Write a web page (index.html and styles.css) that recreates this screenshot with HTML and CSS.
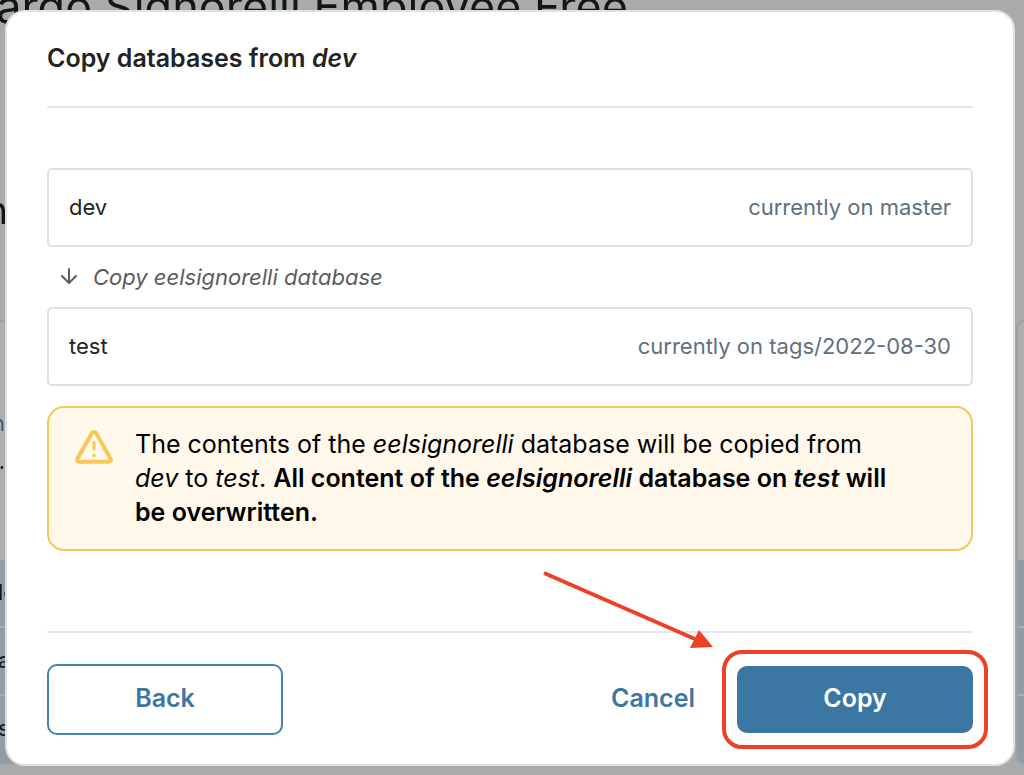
FILE: index.html
```
<!DOCTYPE html>
<html lang="en">
<head>
    <meta charset="UTF-8">
    <meta name="viewport" content="width=device-width, initial-scale=1.0">
    <title>Copy databases</title>
    <link rel="stylesheet" href="styles.css">
</head>
<body>
    <div class="page" aria-hidden="true">
        <div class="page-title"><span>ardo Signorelli Employee Free</span></div>
        <div class="page-tabs"><span>n</span></div>
        <div class="page-panels">
            <div class="panel panel-left">
                <div class="panel-info">
                    <span class="panel-link">n</span>
                    <span>.</span>
                </div>
                <div class="panel-row">le</div>
                <div class="panel-row">a</div>
                <div class="panel-row">s</div>
            </div>
            <div class="panel panel-right">
                <div class="panel-info"></div>
                <div class="panel-row"></div>
                <div class="panel-row"></div>
                <div class="panel-row"></div>
            </div>
        </div>
    </div>

    <div class="overlay">
        <div class="modal" role="dialog" aria-labelledby="modalTitle">
            <h1 class="modal-title" id="modalTitle">Copy databases from <em>dev</em></h1>

            <div class="modal-body">
                <div class="environment">
                    <span>dev</span>
                    <span class="environment-status">currently on master</span>
                </div>

                <div class="copy-step">
                    <svg width="18" height="18" viewBox="0 0 18 18" fill="none" stroke="currentColor" stroke-width="2" stroke-linecap="round" stroke-linejoin="round">
                        <path d="M9 1v14M2 8l7 7 7-7"/>
                    </svg>
                    <em>Copy eelsignorelli database</em>
                </div>

                <div class="environment">
                    <span>test</span>
                    <span class="environment-status">currently on tags/2022-08-30</span>
                </div>

                <div class="alert">
                    <svg class="alert-icon" width="40" height="36" viewBox="0 0 40 36" fill="none" stroke="currentColor" stroke-linecap="round" stroke-linejoin="round">
                        <path stroke-width="4" d="M17.9 4.2 3.4 29.8a2 2 0 0 0 1.8 3h29.6a2 2 0 0 0 1.8-3L22.1 4.2a2.4 2.4 0 0 0-4.2 0z"/>
                        <path stroke-width="3" d="M20 13.500v6.500"/>
                        <circle cx="20" cy="26.500" r="1.800" fill="currentColor" stroke="none"/>
                    </svg>
                    <p>The contents of the <em>eelsignorelli</em> database will be copied from <em>dev</em> to <em>test</em>. <strong>All content of the <em>eelsignorelli</em> database on <em>test</em> will be overwritten.</strong></p>
                </div>
            </div>

            <div class="modal-footer">
                <button type="button" class="btn btn-outline">Back</button>
                <div class="modal-actions">
                    <button type="button" class="btn-link">Cancel</button>
                    <div class="highlight">
                        <button type="button" class="btn btn-primary">Copy</button>
                        <svg class="pointer" width="172" height="82" viewBox="0 0 172 82">
                            <path d="M4 4 155 70" stroke="#eb4226" stroke-width="4"/>
                            <path d="M173 78 159 61 150 79z" fill="#eb4226"/>
                        </svg>
                    </div>
                </div>
            </div>
        </div>
    </div>
</body>
</html>
```
FILE: styles.css
```
* {
    box-sizing: border-box;
}

body {
    margin: 0;
    min-height: 100vh;
    background-color: #a9abaa;
    font-family: Inter, "Liberation Sans", sans-serif;
    font-size: 22px;
    color: #232323;
}

/* Dimmed page behind the dialog */
.page {
    position: fixed;
    top: 0;
    right: 0;
    bottom: 0;
    left: 0;
    overflow: hidden;
    color: #131618;
}

.page-title {
    display: flex;
    justify-content: flex-end;
    width: 628px;
    height: 190px;
    margin-top: -20px;
    font-size: 45px;
    line-height: 54px;
    white-space: nowrap;
}

.page-tabs {
    display: flex;
    justify-content: flex-end;
    width: 8px;
    height: 150px;
    padding-top: 20px;
    font-size: 38px;
    line-height: 40px;
}

.page-panels {
    display: flex;
    justify-content: space-between;
}

.panel {
    background-color: #adadad;
    border: 2px solid #9da0a3;
    border-bottom: none;
    overflow: hidden;
}

.panel-left {
    width: 50px;
    border-left: none;
}

.panel-right {
    width: 8px;
    border-right: none;
    border-radius: 16px 0 0 16px;
}

.panel-info {
    display: flex;
    flex-direction: column;
    align-items: flex-end;
    width: 5px;
    height: 238px;
    padding-top: 82px;
    line-height: 38px;
}

.panel-link {
    color: #2f6584;
}

.panel-row {
    height: 68px;
    border-bottom: 2px solid #adadad;
    background-color: #919da6;
    line-height: 64px;
    text-indent: -2px;
}

.panel-row:last-child {
    border-bottom: none;
}

/* Dialog */
.overlay {
    position: relative;
    padding: 10px 9px 9px 5px;
}

.modal {
    padding: 29px 40px;
    border: 2px solid #dde1e6;
    border-radius: 20px;
    background-color: #fff;
}

.modal-title {
    margin: 0;
    padding-bottom: 31px;
    border-bottom: 2px solid #e3e5e9;
    font-size: 25px;
    font-weight: 600;
    line-height: 34px;
}

.modal-body {
    padding: 60px 0 80px;
}

.environment {
    display: flex;
    justify-content: space-between;
    padding: 24px 20px;
    border: 2px solid #e0e0e0;
    border-radius: 5px;
    line-height: 27px;
}

.environment-status {
    color: #5f7080;
}

.copy-step {
    display: flex;
    align-items: center;
    gap: 15px;
    height: 60px;
    padding-left: 13px;
    color: #5c5c5c;
}

.alert {
    display: flex;
    gap: 21px;
    margin-top: 20px;
    padding: 19px 72px 20px 25px;
    border: 2px solid #f4c75c;
    border-radius: 17px;
    background-color: #fff8eb;
    color: #000;
    font-size: 25px;
    line-height: 34px;
}

.alert-icon {
    flex-shrink: 0;
    margin-top: 2px;
    color: #f7c859;
}

.alert p {
    margin: 0;
}

.alert strong {
    font-weight: 600;
}

.modal-footer {
    display: flex;
    align-items: center;
    justify-content: space-between;
    padding-top: 31px;
    border-top: 2px solid #e1e7ec;
}

.modal-actions {
    display: flex;
    align-items: center;
    gap: 42px;
}

.btn,
.btn-link {
    padding: 0 0 3px;
    font-family: inherit;
    font-size: 25px;
    font-weight: 600;
    cursor: pointer;
}

.btn {
    width: 236px;
    border-radius: 10px;
}

.btn-outline {
    height: 71px;
    border: 2px solid #4583ac;
    background-color: #fff;
    color: #3c77a2;
}

.btn-primary {
    display: block;
    height: 67px;
    border: none;
    background-color: #3c77a3;
    color: #fff;
}

.btn-link {
    border: none;
    background: none;
    color: #3c77a2;
}

.highlight {
    position: relative;
}

.highlight::after {
    content: "";
    position: absolute;
    top: -16px;
    right: -15px;
    bottom: -16px;
    left: -15px;
    border: 4px solid #eb4226;
    border-radius: 20px;
    pointer-events: none;
}

.pointer {
    position: absolute;
    right: 261px;
    bottom: 82px;
    overflow: visible;
    pointer-events: none;
}
```
